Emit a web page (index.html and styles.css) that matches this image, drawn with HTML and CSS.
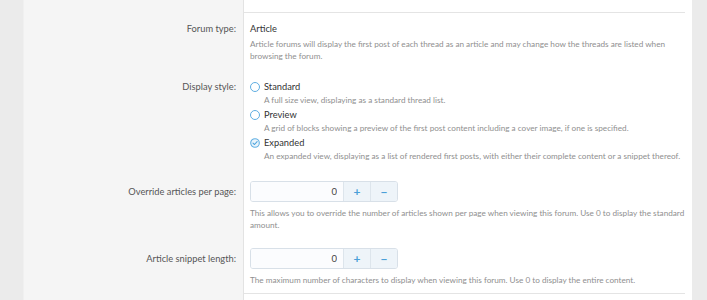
FILE: index.html
```html
<!DOCTYPE html>
<html lang="en">
  <head>
    <meta charset="UTF-8" />
    <title>Forum options</title>
    <link rel="stylesheet" href="styles.css">
  </head>
  <body>
    <div class="page">
      <!-- tail of the previous row -->
      <div class="row row-prev">
        <div class="row-label"></div>
        <div class="row-value">
          <div class="hint">inherit this value.</div>
        </div>
      </div>

      <div class="sep">
        <div class="row-label"></div>
        <div class="row-value"></div>
      </div>

      <div class="row">
        <div class="row-label"><span class="label">Forum type:</span></div>
        <div class="row-value">
          <div class="main">Article</div>
          <div class="hint">Article forums will display the first post of each thread as an article and may change how the threads are listed when browsing the forum.</div>
        </div>
      </div>

      <div class="row">
        <div class="row-label"><span class="label">Display style:</span></div>
        <div class="row-value">
          <div class="choice">
            <span class="radio"></span>
            <div class="choice-text">
              <div class="choice-title">Standard</div>
              <div class="hint">A full size view, displaying as a standard thread list.</div>
            </div>
          </div>
          <div class="choice">
            <span class="radio"></span>
            <div class="choice-text">
              <div class="choice-title">Preview</div>
              <div class="hint">A grid of blocks showing a preview of the first post content including a cover image, if one is specified.</div>
            </div>
          </div>
          <div class="choice">
            <span class="radio checked">
              <svg viewBox="0 0 10 10" width="10" height="10"><circle cx="5" cy="5" r="4.3" fill="#eaf4fb" stroke="#62b0e3" stroke-width="1.1"/><path d="M3 5.1 L4.5 6.5 L7.1 3.7" fill="none" stroke="#4fa5de" stroke-width="1.1" stroke-linecap="round" stroke-linejoin="round"/></svg>
            </span>
            <div class="choice-text">
              <div class="choice-title">Expanded</div>
              <div class="hint">An expanded view, displaying as a list of rendered first posts, with either their complete content or a snippet thereof.</div>
            </div>
          </div>
        </div>
      </div>

      <div class="row">
        <div class="row-label"><span class="label label-input">Override articles per page:</span></div>
        <div class="row-value">
          <div class="number">
            <input class="number-input" type="text" value="0" />
            <button class="number-btn">+</button>
            <button class="number-btn">&minus;</button>
          </div>
          <div class="hint hint-input">This allows you to override the number of articles shown per page when viewing this forum. Use 0 to display the standard amount.</div>
        </div>
      </div>

      <div class="row row-last">
        <div class="row-label"><span class="label label-input">Article snippet length:</span></div>
        <div class="row-value">
          <div class="number">
            <input class="number-input" type="text" value="0" />
            <button class="number-btn">+</button>
            <button class="number-btn">&minus;</button>
          </div>
          <div class="hint hint-input">The maximum number of characters to display when viewing this forum. Use 0 to display the entire content.</div>
        </div>
      </div>

      <div class="sep">
        <div class="row-label"></div>
        <div class="row-value"></div>
      </div>

      <div class="row row-next">
        <div class="row-label"></div>
        <div class="row-value"></div>
      </div>
    </div>
  </body>
</html>
```

FILE: styles.css
```css
* {
  margin: 0;
  padding: 0;
  box-sizing: border-box;
}

body {
  background: #ebebeb;
  font-family: "Lato", "Open Sans", sans-serif;
  color: #333;
  overflow: hidden;
}

/* main block */
.page {
  margin-left: 23px;
  width: 669px;
  margin-top: -9px;
  background: #fff;
  border-left: 1px solid #f0f0f0;
}

.row,
.sep {
  display: flex;
}

.row-label {
  width: 220px;
  flex-shrink: 0;
  background: #f5f5f5;
  border-right: 1px solid #e3e3e3;
  text-align: right;
  padding: 8px 7px 0 0;
}

.row-value {
  flex: 1;
  padding: 8px 7px 9px 6px;
}

.row-prev .row-value {
  padding-top: 0;
}

.row-last .row-value {
  padding-bottom: 7px;
}

.row-next .row-value {
  height: 20px;
}

/* separator line */
.sep .row-label,
.sep .row-value {
  padding: 0;
  height: 1px;
}

.sep .row-value {
  background: #fff;
}

.sep .row-value::after {
  content: "";
  display: block;
  height: 1px;
  margin-right: 7px;
  background: #e4e4e4;
}

.label {
  display: block;
  font-size: 9.3px;
  line-height: 16px;
  color: #555;
}

.label-input {
  padding-top: 3px;
}

.main {
  font-size: 9.3px;
  line-height: 16px;
  color: #333;
}

.hint {
  font-size: 8.2px;
  line-height: 12px;
  color: #8f8f8f;
  margin-top: 1px;
}

.row-prev .hint {
  margin-top: 0;
}

/* radio list */
.choice {
  display: flex;
  margin-bottom: 2px;
}

.choice:first-child {
  margin-top: 1px;
}

.radio {
  width: 10px;
  height: 10px;
  margin: 2px 4px 0 0;
  border: 1.2px solid #5faee2;
  border-radius: 50%;
  flex-shrink: 0;
  background: #fff;
}

.radio.checked {
  border: none;
  background: none;
}

.radio svg {
  display: block;
}

.choice-title {
  font-size: 9.3px;
  line-height: 14px;
  color: #333;
}

.choice-text .hint {
  margin-top: 0;
}

/* number box */
.number {
  display: flex;
  width: 148px;
  height: 21px;
  border: 1px solid #d8e0e8;
  border-radius: 3px;
  overflow: hidden;
}

.number-input {
  flex: 1;
  min-width: 0;
  border: none;
  outline: none;
  background: #fbfcfe;
  font-family: inherit;
  font-size: 9.5px;
  color: #444;
  text-align: right;
  padding-right: 6px;
}

.number-btn {
  width: 27px;
  border: none;
  border-left: 1px solid #dde5ec;
  background: #eef4f9;
  color: #4a9fd8;
  font-family: inherit;
  font-size: 12px;
  font-weight: bold;
  line-height: 19px;
}

.hint-input {
  margin-top: 5px;
}
```
